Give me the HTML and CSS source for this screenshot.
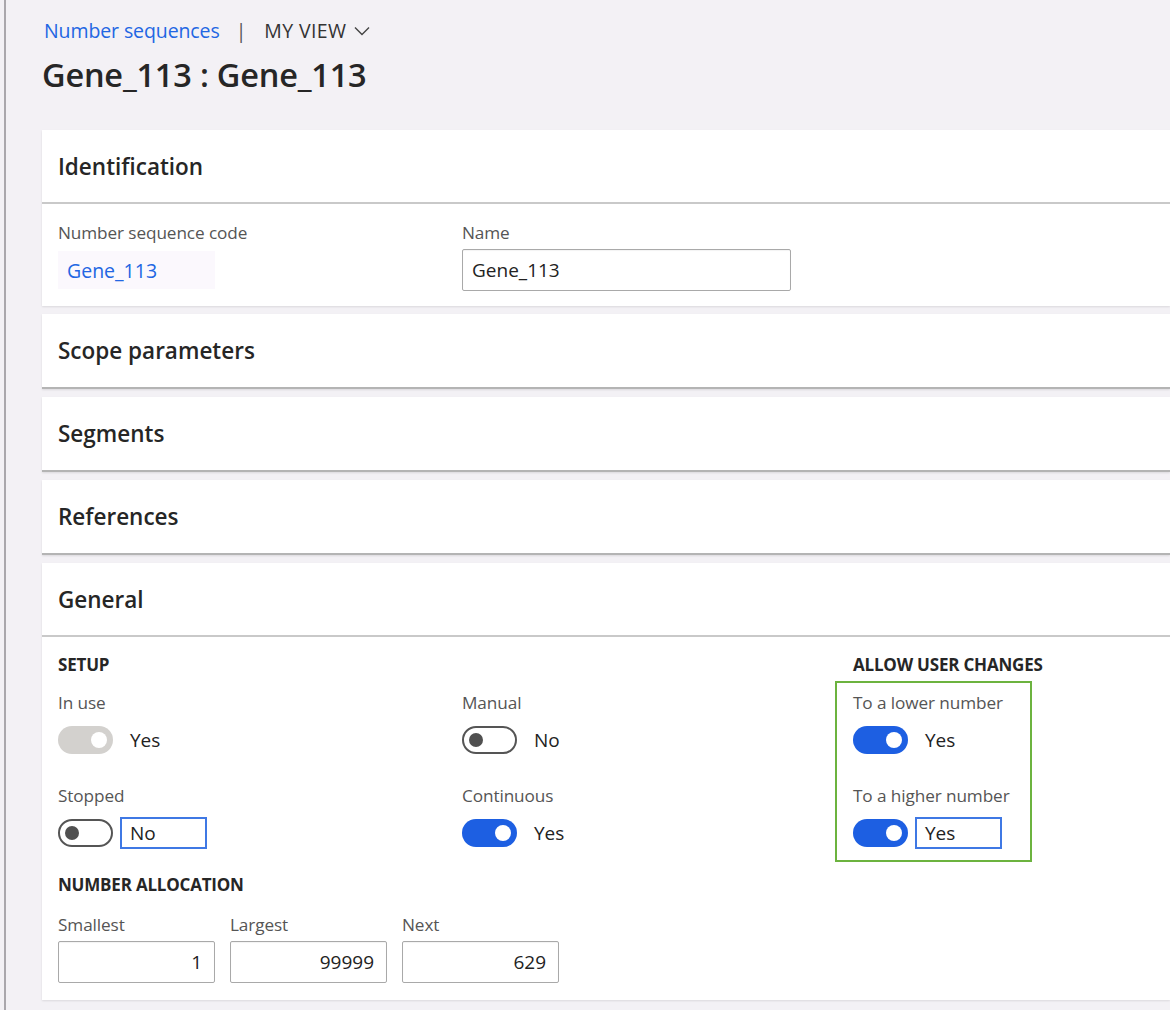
FILE: index.html
```html
<!DOCTYPE html>
<html lang="en">
<head>
<meta charset="utf-8">
<title>Gene_113 : Gene_113</title>
<link rel="stylesheet" href="styles.css">
</head>
<body>
<div class="frame">
  <header class="page-head">
    <nav class="crumbs">
      <a class="crumb-link" href="#">Number sequences</a>
      <span class="crumb-sep">|</span>
      <span class="crumb-view">MY VIEW</span>
      <svg class="chev" width="16" height="10" viewBox="0 0 16 10"><polyline points="1,1.5 8,8.5 15,1.5" fill="none" stroke="#444" stroke-width="1.4"/></svg>
    </nav>
    <h1 class="title">Gene_113 : Gene_113</h1>
  </header>

  <section class="card">
    <div class="card-head expanded">Identification</div>
    <div class="card-body ident">
      <div class="field">
        <div class="label">Number sequence code</div>
        <div class="control"><a class="code-value" href="#">Gene_113</a></div>
      </div>
      <div class="field">
        <div class="label">Name</div>
        <div class="control"><div class="input name-input">Gene_113</div></div>
      </div>
    </div>
  </section>

  <section class="card"><div class="card-head collapsed">Scope parameters</div></section>
  <section class="card"><div class="card-head collapsed">Segments</div></section>
  <section class="card"><div class="card-head collapsed">References</div></section>

  <section class="card">
    <div class="card-head expanded">General</div>
    <div class="card-body general">
      <div class="gen-top">
        <div class="setup">
          <div class="group-title">SETUP</div>
          <div class="setup-grid">
            <div class="field">
              <div class="label">In use</div>
              <div class="control"><span class="toggle disabled"><span class="knob"></span></span><span class="tval">Yes</span></div>
            </div>
            <div class="field">
              <div class="label">Manual</div>
              <div class="control"><span class="toggle off"><span class="knob"></span></span><span class="tval">No</span></div>
            </div>
            <div class="field">
              <div class="label">Stopped</div>
              <div class="control"><span class="toggle off"><span class="knob"></span></span><span class="tval focus">No</span></div>
            </div>
            <div class="field">
              <div class="label">Continuous</div>
              <div class="control"><span class="toggle on"><span class="knob"></span></span><span class="tval">Yes</span></div>
            </div>
          </div>
        </div>
        <div class="allow">
          <div class="group-title allow-title">ALLOW USER CHANGES</div>
          <div class="allow-box">
            <div class="field">
              <div class="label">To a lower number</div>
              <div class="control"><span class="toggle on"><span class="knob"></span></span><span class="tval">Yes</span></div>
            </div>
            <div class="field">
              <div class="label">To a higher number</div>
              <div class="control"><span class="toggle on"><span class="knob"></span></span><span class="tval focus">Yes</span></div>
            </div>
          </div>
        </div>
      </div>
      <div class="group-title alloc-title">NUMBER ALLOCATION</div>
      <div class="alloc">
        <div class="field">
          <div class="label">Smallest</div>
          <div class="control"><div class="input num">1</div></div>
        </div>
        <div class="field">
          <div class="label">Largest</div>
          <div class="control"><div class="input num">99999</div></div>
        </div>
        <div class="field">
          <div class="label">Next</div>
          <div class="control"><div class="input num">629</div></div>
        </div>
      </div>
    </div>
  </section>
</div>
</body>
</html>
```

FILE: styles.css
```css
* { box-sizing: border-box; }
html, body { margin: 0; padding: 0; }
body {
  background: #f3f1f5;
  font-family: "Open Sans", "Noto Sans", sans-serif;
  color: #222;
  overflow: hidden;
}
.frame {
  margin-left: 4px;
  border-left: 2px solid #aaa7ac;
  min-height: 1010px;
  padding-left: 36px;
}
.page-head { padding-top: 16px; height: 130px; }
.crumbs {
  display: flex;
  align-items: center;
  height: 28px;
  font-size: 19.5px;
  padding-left: 2px;
  letter-spacing: -0.1px;
}
.crumb-link { color: #2266e3; text-decoration: none; }
.crumb-sep { color: #555; margin: 0 18px 0 16px; }
.crumb-view { color: #333; letter-spacing: 0.4px; }
.chev { margin-left: 8px; margin-top: 1px; }
.title {
  margin: 0;
  margin-top: 12px;
  font-size: 32.5px;
  font-weight: 600;
  line-height: 38px;
  color: #262626;
  letter-spacing: -0.2px;
}
.card {
  background: #fff;
  margin-bottom: 8px;
  box-shadow: 0 1px 2px rgba(0,0,0,0.10);
}
.card-head {
  height: 75px;
  display: flex;
  align-items: center;
  padding-left: 16px;
  font-size: 22.5px;
  font-weight: 600;
  color: #262626;
}
.card-head.expanded { border-bottom: 2px solid #c9c9c9; height: 74px; }
.card-head.collapsed { border-bottom: 2px solid #b4b4b4; }
.card-body { padding: 19px 16px 15px; }
.ident { display: grid; grid-template-columns: 404px 329px; }
.field { display: flex; flex-direction: column; }
.label {
  font-size: 17.2px;
  line-height: 20px;
  color: #555;
  margin-bottom: 6px;
  white-space: nowrap;
  letter-spacing: -0.1px;
}
.control { height: 42px; display: flex; align-items: center; }
.code-value {
  display: flex;
  align-items: center;
  width: 157px;
  height: 38px;
  background: #fbf8fd;
  padding-left: 9px;
  color: #2266e3;
  text-decoration: none;
  font-size: 19.5px;
}
.input {
  height: 42px;
  border: 1px solid #a9a9a9;
  border-radius: 2px;
  display: flex;
  align-items: center;
  font-size: 19px;
  color: #222;
  background: #fff;
  box-shadow: inset 0 1px 1px rgba(0,0,0,0.05);
}
.name-input { width: 329px; padding-left: 9px; }
.num { width: 157px; justify-content: flex-end; padding-right: 12px; }
.general { padding: 18px 16px 17px; }
.gen-top { display: flex; }
.setup { width: 777px; }
.group-title {
  font-size: 17px;
  line-height: 20px;
  font-weight: 700;
  color: #262626;
  letter-spacing: -0.2px;
}
.setup .group-title { margin-bottom: 18px; }
.setup-grid {
  display: grid;
  grid-template-columns: 404px 373px;
  row-gap: 25px;
}
.allow-title { padding-left: 18px; margin-bottom: 6px; white-space: nowrap; }
.allow-box {
  width: 197px;
  border: 2px solid #6cb33f;
  padding: 10px 14px 6px 16px;
  display: flex;
  flex-direction: column;
  gap: 25px;
}
.toggle {
  position: relative;
  width: 55px;
  height: 28px;
  border-radius: 14px;
  flex: none;
  margin-right: 7px;
}
.toggle .knob {
  position: absolute;
  top: 50%;
  width: 16px;
  height: 16px;
  margin-top: -8px;
  border-radius: 50%;
}
.toggle.on { background: #1d5fe2; }
.toggle.on .knob { right: 6px; background: #fff; }
.toggle.disabled { background: #d3d1ce; }
.toggle.disabled .knob { right: 6px; background: #fff; }
.toggle.off { background: #fff; border: 2px solid #555; }
.toggle.off .knob { left: 5px; background: #505050; width: 14px; height: 14px; margin-top: -7px; }
.tval {
  width: 87px;
  height: 32px;
  border: 2px solid transparent;
  padding-left: 8px;
  display: flex;
  align-items: center;
  font-size: 19px;
  color: #222;
}
.tval.focus { border-color: #3f78e4; }
.alloc-title { margin-top: 13px; margin-bottom: 20px; }
.alloc { display: flex; gap: 15px; }
```
